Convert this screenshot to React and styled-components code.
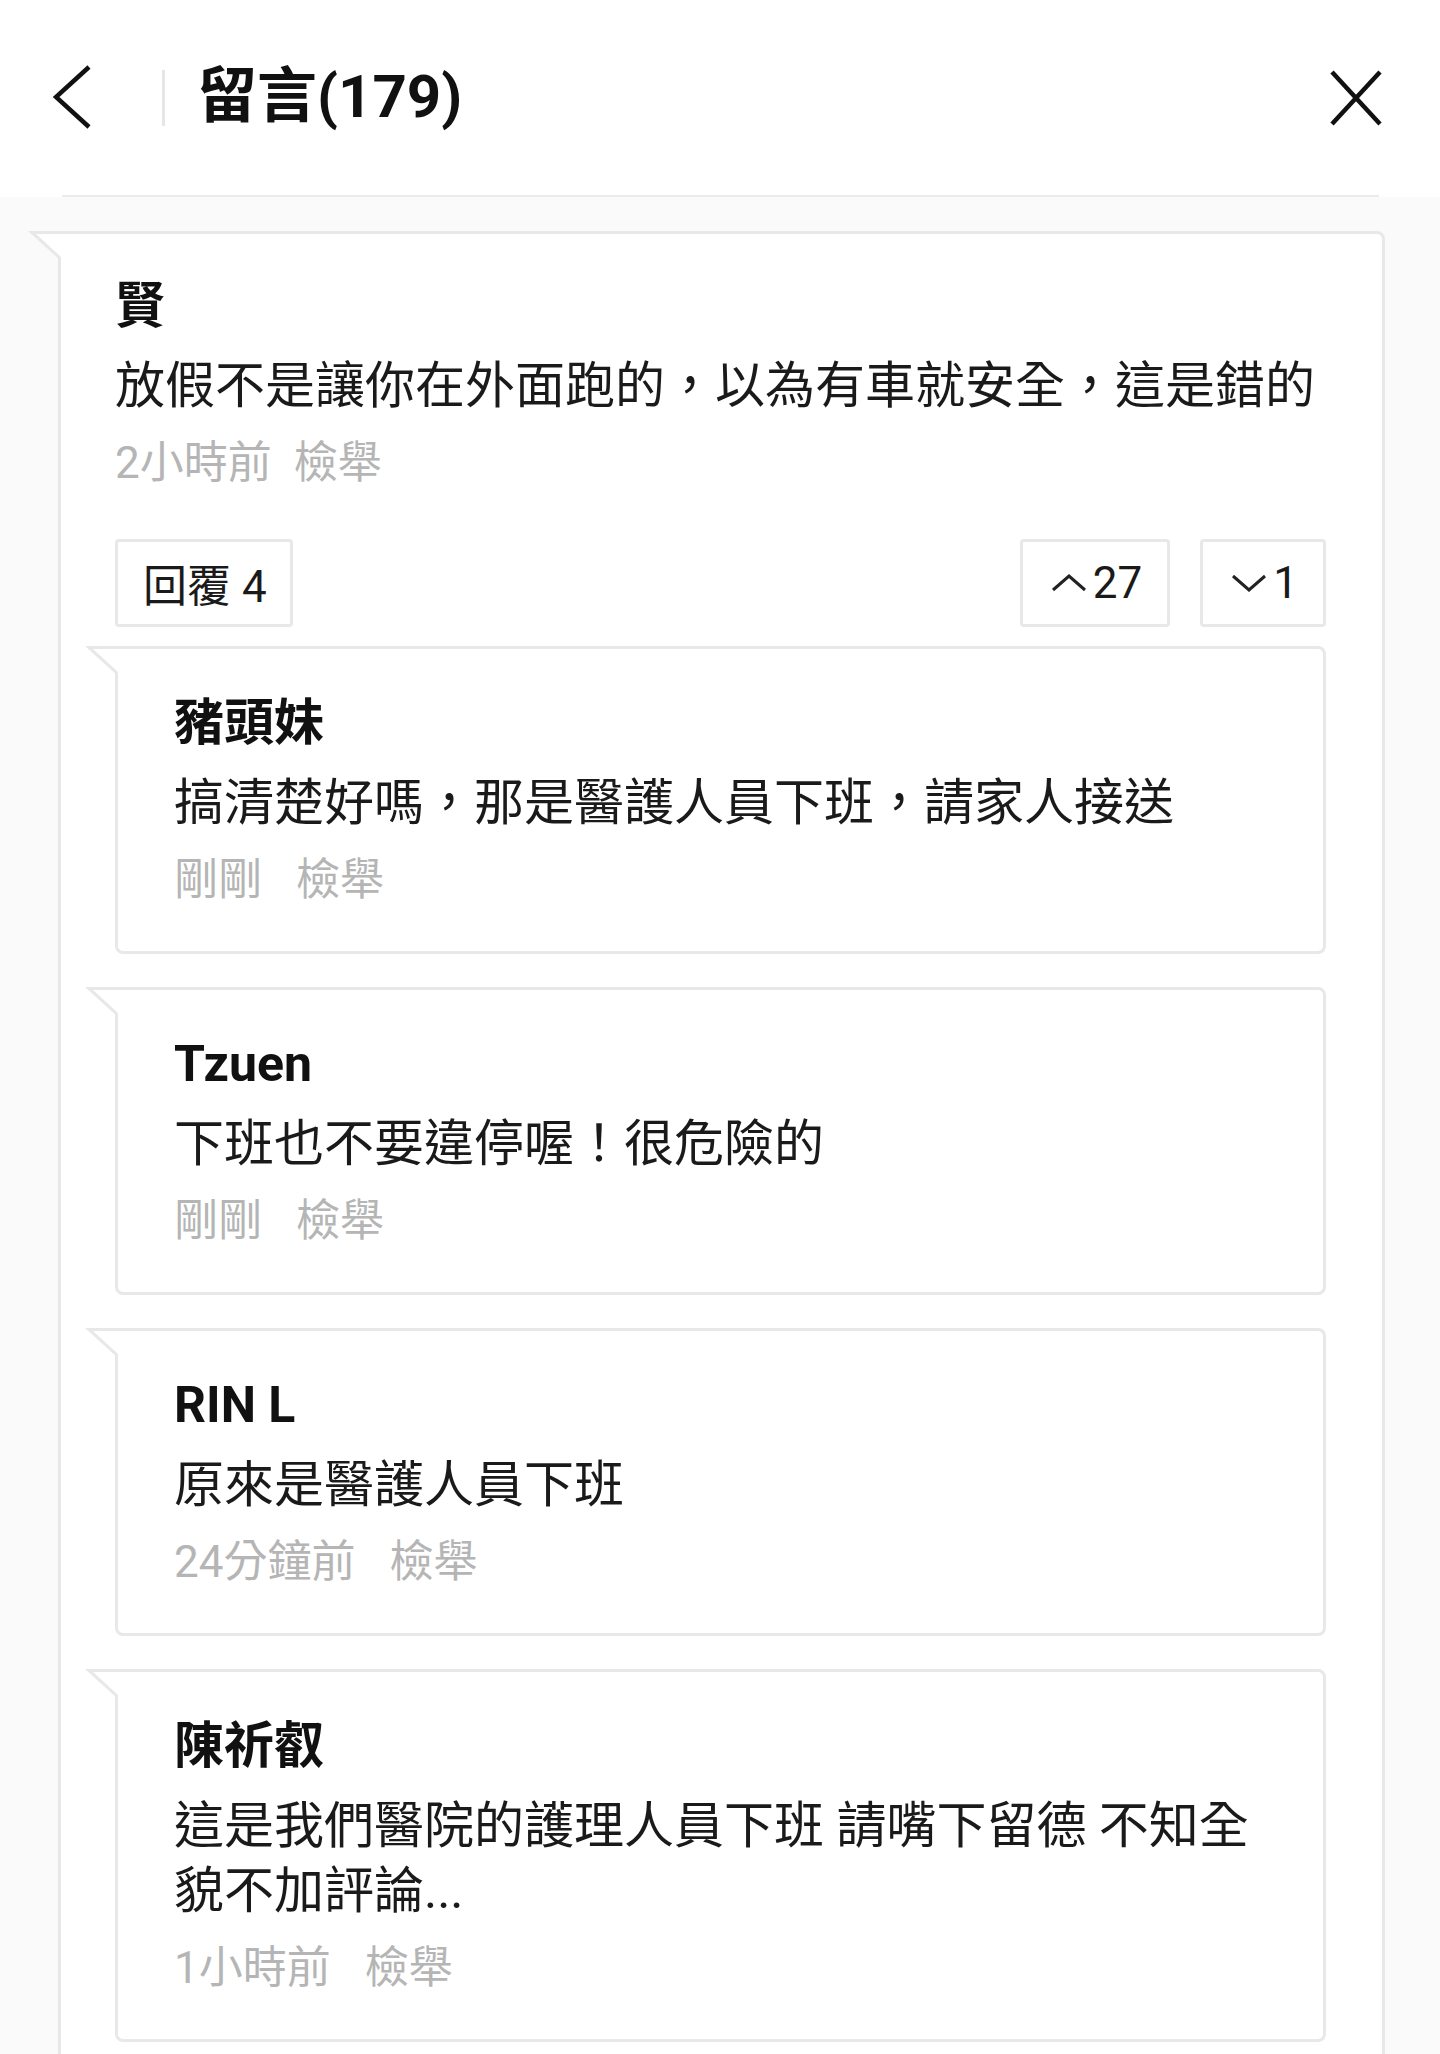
import React from "react";
import styled, { createGlobalStyle } from "styled-components";

const GlobalStyle = createGlobalStyle`
    html, body {
        margin: 0;
        padding: 0;
        background: #fafafa;
    }
    body {
        font-family: Roboto, "Noto Sans CJK TC", sans-serif;
        color: #1a1a1a;
        overflow: hidden;
    }
`;

const replies = [
    { name: "豬頭妹", text: "搞清楚好嗎，那是醫護人員下班，請家人接送", time: "剛剛" },
    { name: "Tzuen", text: "下班也不要違停喔！很危險的", time: "剛剛" },
    { name: "RIN L", text: "原來是醫護人員下班", time: "24分鐘前" },
    { name: "陳祈叡", text: "這是我們醫院的護理人員下班 請嘴下留德 不知全貌不加評論...", time: "1小時前" },
];

const App = () => (
    <Page>
        <GlobalStyle />
        <Header>
            <HeaderBar>
                <IconButton aria-label="back">
                    <svg width="40" height="66" viewBox="0 0 40 66">
                        <polyline points="36,2 3,32 36,62" fill="none" stroke="#111" strokeWidth="4.5" />
                    </svg>
                </IconButton>
                <HeaderDivider />
                <Title>留言(179)</Title>
                <CloseButton aria-label="close">
                    <svg width="54" height="56" viewBox="0 0 54 56">
                        <line x1="3" y1="2" x2="51" y2="54" stroke="#111" strokeWidth="4.5" />
                        <line x1="51" y1="2" x2="3" y2="54" stroke="#111" strokeWidth="4.5" />
                    </svg>
                </CloseButton>
            </HeaderBar>
            <HeaderRule />
        </Header>

        <Content>
            <Card $main>
                <Name>賢</Name>
                <Text>放假不是讓你在外面跑的，以為有車就安全，這是錯的</Text>
                <Meta $gap={22}>
                    <span>2小時前</span>
                    <span>檢舉</span>
                </Meta>
                <Actions>
                    <ActionButton>回覆 4</ActionButton>
                    <VoteGroup>
                        <ActionButton $vote>
                            <svg width="36" height="20" viewBox="0 0 36 20">
                                <polyline points="2,17 18,3 34,17" fill="none" stroke="#222" strokeWidth="3" />
                            </svg>
                            27
                        </ActionButton>
                        <ActionButton $vote>
                            <svg width="36" height="20" viewBox="0 0 36 20">
                                <polyline points="2,3 18,17 34,3" fill="none" stroke="#222" strokeWidth="3" />
                            </svg>
                            1
                        </ActionButton>
                    </VoteGroup>
                </Actions>
                <Replies>
                    {replies.map((r) => (
                        <Card key={r.name}>
                            <Name>{r.name}</Name>
                            <Text>{r.text}</Text>
                            <Meta $gap={34}>
                                <span>{r.time}</span>
                                <span>檢舉</span>
                            </Meta>
                        </Card>
                    ))}
                </Replies>
            </Card>
        </Content>
    </Page>
);

const Page = styled.div`
    width: 1440px;
    min-height: 2054px;
    background: #fafafa;
`;

const Header = styled.header`
    background: #fff;
    height: 197px;
    display: flex;
    flex-direction: column;
`;

const HeaderBar = styled.div`
    flex: 1;
    display: flex;
    align-items: center;
    padding: 0 57px 0 53px;
`;

const IconButton = styled.button`
    background: none;
    border: none;
    padding: 0;
    display: flex;
    align-items: center;
    cursor: pointer;
`;

const CloseButton = styled(IconButton)`
    margin-left: auto;
`;

const HeaderDivider = styled.div`
    width: 3px;
    height: 56px;
    background: #e6e6e6;
    margin-left: 69px;
`;

const Title = styled.h1`
    margin: 0 0 0 32px;
    font-size: 60px;
    font-weight: 700;
    color: #111;
    line-height: 1;
    padding-bottom: 2px;
`;

const HeaderRule = styled.div`
    height: 2px;
    background: #ebebeb;
    margin: 0 61px 0 62px;
`;

const Content = styled.main`
    padding: 34px 55px 0 58px;
`;

const Card = styled.div`
    position: relative;
    background: #fff;
    border: 3px solid #e8e8e8;
    border-radius: ${(p) => (p.$main ? "0 8px 0 0" : "0 8px 8px 8px")};
    padding: ${(p) => (p.$main ? "40px 56px 60px 54px" : "42px 58px 43px 56px")};

    &::before {
        content: "";
        position: absolute;
        top: -3px;
        left: -33px;
        width: 33px;
        height: 30px;
        background: #e8e8e8;
        clip-path: polygon(0 0, 100% 0, 100% 100%);
    }

    &::after {
        content: "";
        position: absolute;
        top: 0;
        left: -25px;
        width: 25px;
        height: 23px;
        background: #fff;
        clip-path: polygon(0 0, 100% 0, 100% 100%);
    }
`;

const Name = styled.div`
    font-size: 50px;
    font-weight: 700;
    line-height: 65px;
    color: #111;
`;

const Text = styled.p`
    margin: 15px 0 0;
    font-size: 50px;
    line-height: 65px;
    color: #1a1a1a;
`;

const Meta = styled.div`
    margin-top: 16px;
    display: flex;
    gap: ${(p) => p.$gap}px;
    font-size: 44px;
    line-height: 56px;
    color: #b5b5b5;
`;

const Actions = styled.div`
    margin-top: 48px;
    display: flex;
    justify-content: space-between;
    align-items: center;
`;

const VoteGroup = styled.div`
    display: flex;
    gap: 30px;
`;

const ActionButton = styled.button`
    height: 88px;
    display: flex;
    align-items: center;
    gap: 6px;
    padding: ${(p) => (p.$vote ? "0 25px 0 28px" : "0 23px 0 25px")};
    background: #fff;
    border: 3px solid #e8e8e8;
    border-radius: 4px;
    font-family: Roboto, "Noto Sans CJK TC", sans-serif;
    font-size: 44px;
    color: #1a1a1a;
    cursor: pointer;
`;

const Replies = styled.div`
    margin-top: 19px;
    display: flex;
    flex-direction: column;
    gap: 33px;
`;

export default App;
